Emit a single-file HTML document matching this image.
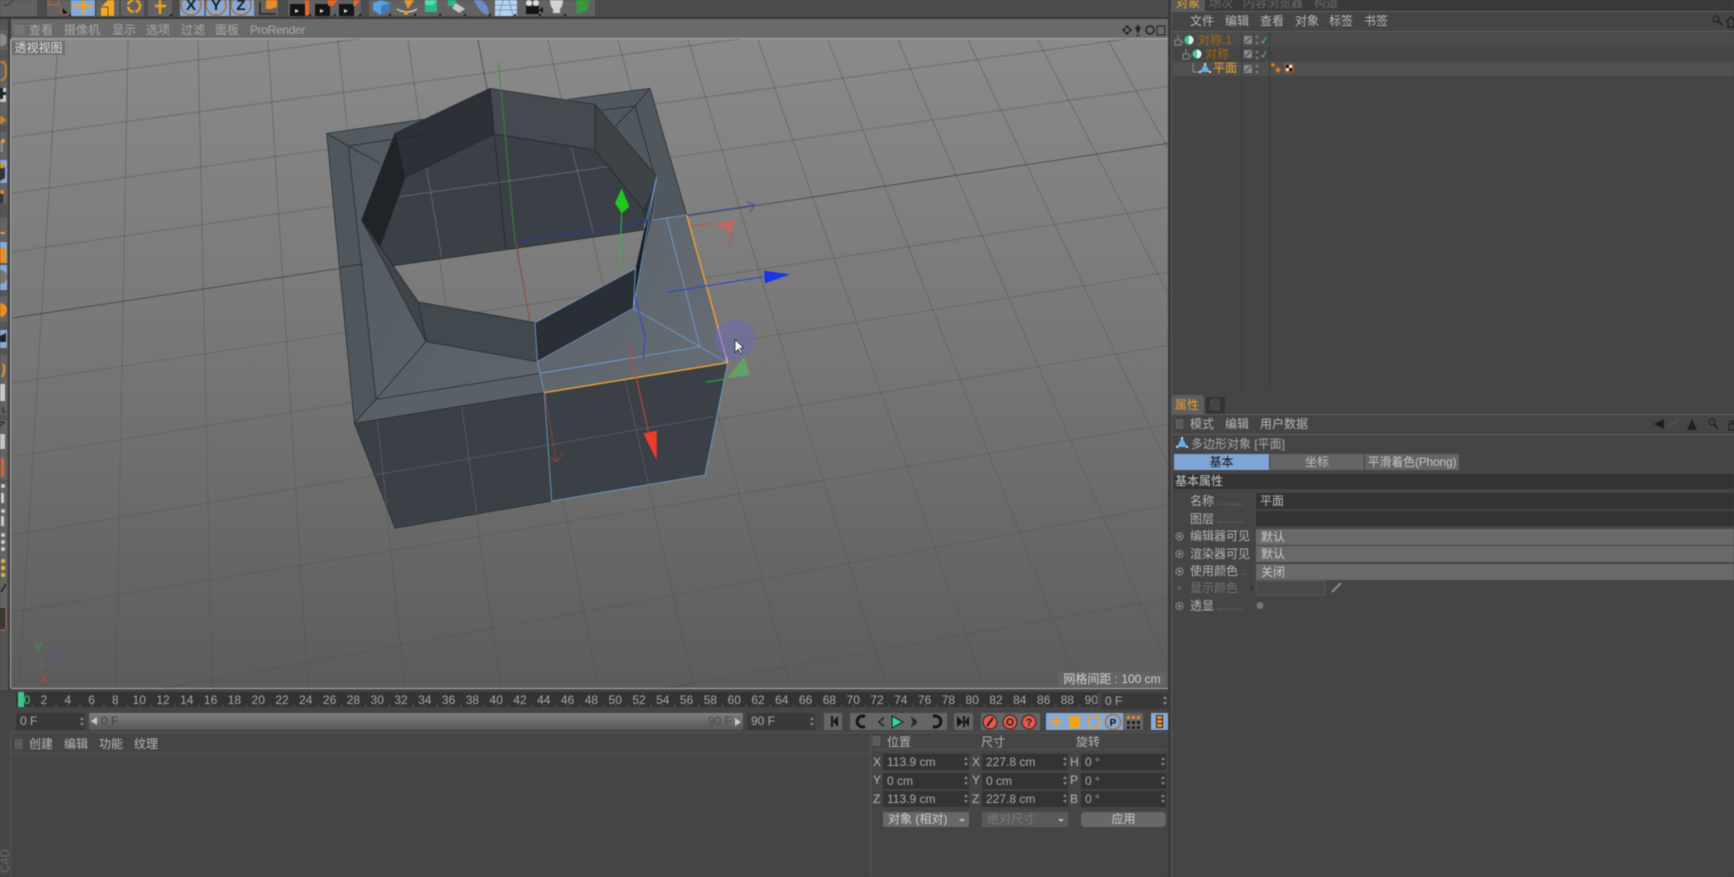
<!DOCTYPE html>
<html><head><meta charset="utf-8"><style>
html,body{margin:0;padding:0;background:#454545;width:1734px;height:877px;overflow:hidden}
#r{position:relative;width:1734px;height:877px;overflow:hidden;background:#454545;font:12px/16px "Liberation Sans","Noto Sans CJK SC",sans-serif;color:#b5b5b5;filter:blur(.4px)}
#r div{position:absolute;white-space:nowrap}
.m{color:#b8b8b8}.v{color:#a9a9a9}.f{background:#333;height:16px;color:#aaa;padding-left:4px;box-sizing:border-box}
.g{background:#696969;height:16px;color:#ccc;box-sizing:border-box;padding-left:5px}
svg{position:absolute;left:0;top:0}
</style></head><body><div id="r">
<div style="left:0;top:0;width:1168px;height:17px;background:#4c4c4c"></div>
<div style="left:0;top:17px;width:1168px;height:2px;background:#383838"></div>
<div style="left:10px;top:19px;width:1158px;height:20px;background:#6a6a6a"></div>
<div style="left:0;top:19px;width:8px;height:671px;background:#555"></div>
<div style="left:8px;top:19px;width:3px;height:671px;background:#3c3c3c"></div>
<svg width="1157" height="649" viewBox="11 39 1157 649" style="left:11px;top:39px">
<defs>
<linearGradient id="bg" x1="0" y1="0" x2="0" y2="1"><stop offset="0" stop-color="#8a8a8a"/><stop offset=".5" stop-color="#767676"/><stop offset="1" stop-color="#5c5c5c"/></linearGradient>
<linearGradient id="gl" gradientUnits="userSpaceOnUse" x1="0" y1="39" x2="0" y2="688"><stop offset="0" stop-color="#383838" stop-opacity=".37"/><stop offset="1" stop-color="#383838" stop-opacity=".18"/></linearGradient>
<linearGradient id="tp" gradientUnits="userSpaceOnUse" x1="100" y1="300" x2="1200" y2="900"><stop offset="0" stop-color="#525a60"/><stop offset="1" stop-color="#646b72"/></linearGradient>
<linearGradient id="zx" gradientUnits="userSpaceOnUse" x1="0" y1="39" x2="0" y2="688"><stop offset="0" stop-color="#303030" stop-opacity=".62"/><stop offset=".5" stop-color="#303030" stop-opacity=".3"/><stop offset="1" stop-color="#383838" stop-opacity=".18"/></linearGradient>
</defs>
<rect x="11" y="39" width="1157" height="649" fill="url(#bg)"/>
<g stroke="url(#gl)" stroke-width="1" fill="none">
<path d="M58 40L19 688M128 40L116 688M198 40L212 688M268 40L308 688M338 40L405 688M408 40L501 688M548 40L694 688M618 40L791 688M688 40L887 688M758 40L984 688M828 40L1080 688M898 40L1177 688M968 40L1273 688M1038 40L1370 688M1108 40L1466 688"/>
<path d="M12 35L1170 -110M12 84L1170 -66M12 137L1170 -19M12 193L1170 33M12 252L1170 86M12 383L1170 207M12 457L1170 272M12 535L1170 345M12 612L1170 424M12 716L1170 505M12 805L1170 598"/>
</g>
<path d="M12 318L1170 143" stroke="#303030" stroke-width="1" fill="none" opacity=".62"/>
<path d="M478 40L598 688" stroke="url(#zx)" stroke-width="1" fill="none"/>
<g transform="translate(300 60) scale(.33333)" stroke-linejoin="round">
<path d="M163 1090L1283 908L1215 1245L755 1323L285 1405Z" fill="#3a4045"/>
<path fill-rule="evenodd" fill="url(#tp)" d="M80 220L370 178L805 118L1050 85L1160 465L1283 908L733 998L163 1090ZM185 480L378 845L712 905L1000 745L1070 350L885 133L570 85L285 220Z"/>
<path d="M80 220L145 258L228 1018L163 1090Z" fill="#4f575d"/>
<path d="M805 118L1050 85L1160 465L1060 480L1072 350L885 133Z" fill="#50575d"/>
<path d="M163 1090L228 1018L720 940L733 998Z" fill="#596066"/>
<path d="M315 352L583 222L885 270L1030 450L1030 510L275 618L240 560Z" fill="#3a4046"/>
<path d="M185 480L285 220L315 352L240 560Z" fill="#1f2428"/>
<path d="M285 220L570 85L583 222L315 352Z" fill="#2d3036"/>
<path d="M570 85L885 133L885 270L583 222Z" fill="#444a50"/>
<path d="M885 133L1070 350L1030 450L885 270Z" fill="#3e4348"/>
<path d="M1070 350L1062 430L1035 500L1030 450Z" fill="#2f3338"/>
<path d="M1062 430L1003 715L1007 625L1035 500Z" fill="#1b2026"/>
<path d="M705 788L1005 625L1000 745L712 905Z" fill="#2a2f36"/>
<path d="M355 726L705 788L712 905L378 845Z" fill="#41484e"/>
<path d="M185 480L240 560L355 726L378 845Z" fill="#3f454b"/>
<g fill="none" stroke="#8c9095" stroke-width="2.4" opacity=".6">
<path d="M300 410L925 320M380 325L425 592M815 265L880 520"/>
<path d="M225 1245L1240 1070M232 1080L262 1360M485 1040L530 1360M975 960L1045 1270" stroke="#6f7479"/>
</g>
<g fill="none" stroke="#1d2226" stroke-width="2.3" opacity=".85">
<path d="M80 220L370 178M805 118L1050 85L1160 465M80 220L163 1090L733 998M80 220L145 258L228 1018L720 940M145 258L365 225M163 1090L228 1018L378 845M145 258L240 310M1050 85L1005 138L945 200M1005 138L905 150M1005 138L1062 340M120 622L190 612"/>
<path d="M185 480L285 220L570 85L885 133L1070 350M285 220L315 352L583 222L885 270L1030 450M570 85L583 222L617 565M885 133L885 270M185 480L240 560L355 726L705 788M185 480L378 845L712 905M355 726L378 845M240 560L315 352M275 618L1030 510M1030 450L1030 510"/>
<path d="M163 1090L285 1405L755 1323" stroke-width="2"/>
</g>
<g fill="none" stroke="#6ea3d8" stroke-width="2.4">
<path d="M705 788L712 905L733 998L755 1323L1215 1245L1283 908M720 940L1200 860L1283 908M1200 860L1100 475M1000 745L1200 860M712 905L1000 745M705 788L1007 625L1000 745L1070 350L1035 500M1060 480L1160 465"/>
</g>
<path d="M1160 465L1283 908L733 998" fill="none" stroke="#f2a52c" stroke-width="4"/>
<path d="M1252 800L1283 908" stroke="#e8a5cf" stroke-width="4"/>
<g fill="none" stroke-width="2.6">
<path d="M595 5L645 545" stroke="#3d8b3d"/>
<path d="M648 545L1040 485" stroke="#2636a8"/>
<path d="M1160 465L1365 435M1340 425L1365 435L1348 457" stroke="#3b48a8"/>
<path d="M648 545L690 785" stroke="#a04a40"/>
<path d="M735 1000L768 1205M745 1188L768 1205L790 1180" stroke="#a53c36"/>
<path d="M958 635L965 460" stroke="#30b54a" stroke-width="3"/>
<path d="M985 848L1045 1115" stroke="#c8483c" stroke-width="3"/>
<path d="M1100 697L1392 650" stroke="#2c3fdc" stroke-width="3"/>
<path d="M1005 710L1035 830L1030 895" stroke="#3044d8" stroke-width="3"/>
<path d="M1170 497L1240 490M1295 520L1288 560" stroke="#b8544c" stroke-width="3"/>
<path d="M1218 967L1283 955" stroke="#2f9a3c" stroke-width="4"/>
<path d="M1318 835L1332 890" stroke="#4ab0b8" stroke-width="3"/>
</g>
<path d="M965 385L945 430L965 460L988 440Z" fill="#1fc71f"/>
<path d="M1030 1120L1070 1112L1070 1200Z" fill="#f03c26"/>
<path d="M1392 632L1470 643L1395 670Z" fill="#1c33ea"/>
<path d="M1240 490L1305 478L1295 520Z" fill="#c9655c" opacity=".8"/>
<path d="M1283 955L1350 945L1332 890Z" fill="#5fa565" opacity=".9"/>
<circle cx="1305" cy="838" r="60" fill="#6c6cb0" opacity=".55"/>
<path d="M1305 838L1305 878L1315 868L1323 882L1328 878L1320 865L1331 863Z" fill="#f4f4f4" stroke="#111" stroke-width="2"/>
</g>
<path d="M42 668V652M42 668L54 660M42 668V675" stroke="#666" fill="none"/>
<text x="38" y="651" font-family="Liberation Sans" font-size="11" fill="#3ea550" text-anchor="middle">Y</text>
<text x="58" y="660" font-family="Liberation Sans" font-size="11" fill="#4a5ec0" text-anchor="middle">Z</text>
<text x="44" y="683" font-family="Liberation Sans" font-size="11" fill="#c8423a" text-anchor="middle">X</text>
</svg>
<div style="left:11px;top:38px;width:1157px;height:1px;background:#a8a8a8"></div>
<div style="left:10px;top:39px;width:1px;height:649px;background:#a8a8a8"></div>
<div style="left:11px;top:688px;width:1157px;height:1px;background:#a8a8a8"></div>

<svg width="1734" height="877" viewBox="0 0 1734 877">
<g fill="#626262"><rect x="0" y="0" width="37" height="16"/><rect x="47" y="0" width="97" height="16"/><rect x="148" y="0" width="24" height="16"/><rect x="180" y="0" width="98" height="16"/><rect x="288" y="0" width="73" height="16"/><rect x="369" y="0" width="226" height="16"/></g>
<rect x="71" y="0" width="24" height="16" fill="#86a9d8"/><rect x="180" y="0" width="74" height="16" fill="#86a9d8"/>
<g fill="none" stroke="#3a3a3a"><path d="M13 0Q9 6 3 5M95.500 0V16M120 0V16M205 0V16M230 0V16"/></g>
<path d="M48 0V5H59V0M61 8L67 14L61 13Z" stroke="#c2603a" stroke-width="1.2" fill="none"/><path d="M62 8L68 13L63 14Z" fill="#111"/>
<g stroke="#f0a21e" stroke-width="2.4" fill="none"><path d="M83 0V14M74 6H92M155 6H166M160 0V14"/></g>
<path d="M101 16V7L108 0H114V16Z" fill="#f2aa24"/><path d="M101 7H108V16" fill="none" stroke="#6b5a34"/>
<circle cx="134" cy="6" r="6" fill="none" stroke="#f0a21e" stroke-width="2.4" stroke-dasharray="8 2"/>
<g fill="none" stroke="#a9703a" stroke-width="1.6"><circle cx="191" cy="5" r="10"/><circle cx="216" cy="5" r="10"/><circle cx="241" cy="5" r="10"/></g>
<g font-family="Liberation Sans" font-size="15" font-weight="bold" fill="#1b1b1b" text-anchor="middle"><text x="191" y="10">X</text><text x="216" y="10">Y</text><text x="241" y="10">Z</text></g>
<path d="M260 2V14H276" fill="none" stroke="#222" stroke-width="1.5"/><path d="M266 0H277V7L271 9H266Z" fill="#ec8a28"/>
<g fill="#141414"><rect x="290" y="4" width="15" height="12"/><rect x="315" y="4" width="15" height="12"/><rect x="339" y="4" width="15" height="12"/></g>
<g fill="#ddd"><path d="M295 9L299 11L295 13ZM320 9L324 11L320 13ZM344 9L348 11L344 13Z"/></g>
<g fill="#e4662a"><path d="M305 0H309V15H305ZM328 0H338L333 6H328ZM354 0H360L356 6H353Z"/></g>
<path d="M373 3L381 0L390 3V10L381 15L373 10Z" fill="#5aa3e0"/><path d="M381 6L390 3V10L381 15Z" fill="#3e7cba"/>
<path d="M404 0H414L408 9Z" fill="#ea9a2a"/><path d="M397 9Q407 15 417 9" stroke="#ddd" fill="none" stroke-width="1.2"/><circle cx="406" cy="13" r="2" fill="#e89a28"/>
<path d="M425 0H437V12H425Z" fill="#2cb98a"/><path d="M425 0H437L433 5H425Z" fill="#54dfae"/>
<path d="M448 0H456V6H448Z" fill="#2cb98a"/><path d="M456 3L465 9L459 13L452 8Z" fill="#c4c4c4"/>
<path d="M474 0H481Q490 6 488 15Q480 14 474 0Z" fill="#6f8ac9"/>
<path d="M495 0H517V16H495Z" fill="#b7d3f0"/><path d="M495 5H517M495 10H517M503 0L499 16M509 0L513 16" stroke="#7e9bc0" fill="none"/>
<rect x="526" y="6" width="13" height="8" fill="#141414"/><circle cx="529" cy="3" r="3" fill="#ddd"/><circle cx="536" cy="3" r="3" fill="#ddd"/><path d="M539 10L543 7V13Z" fill="#141414"/>
<path d="M550 0H563Q563 6 560 9V13H553V9Q550 6 550 0Z" fill="#d2d2d2"/>
<path d="M576 0H590L587 10L577 14Z" fill="#27a43c"/><path d="M578 7L588 2" stroke="#d83a34" stroke-width="1.6" stroke-dasharray="2 1.400"/>
<g fill="#1c1c1c"><path d="M68 16H71V13ZM169 16H172V13ZM308 16H311V13ZM333 16H336V13ZM358 16H361V13ZM388 16H391V13ZM413 16H416V13ZM438 16H441V13ZM463 16H466V13ZM488 16H491V13ZM513 16H516V13ZM538 16H541V13ZM563 16H566V13Z"/></g>
<g fill="#646464"><rect y="30" width="7" height="20"/><rect y="60" width="7" height="65"/><rect y="132" width="7" height="72"/><rect y="218" width="7" height="24"/><rect y="296" width="7" height="26"/><rect y="355" width="7" height="60"/><rect y="420" width="7" height="60"/><rect y="483" width="7" height="125"/></g>
<g fill="#86a9d8"><rect y="160" width="7" height="23"/><rect y="242" width="7" height="21"/><rect y="265" width="7" height="25"/><rect y="330" width="7" height="18"/></g>
<circle cx="1" cy="40" r="6" fill="#8c8c8c"/>
<path d="M0 62H3L6 66V76L3 80H0" fill="none" stroke="#d9872a" stroke-width="1.500"/>
<rect y="88" width="6" height="14" fill="#ccc"/><path d="M0 88H3V92H6V95H3V99H0Z" fill="#222"/>
<path d="M0 115L6 120L0 125Z" fill="#cc8530"/>
<path d="M0 141H3V152H0Z" fill="#888"/><circle cx="3" cy="141" r="2" fill="#e9972c"/>
<path d="M0 167H5V178L0 181Z" fill="#333"/><circle cx="2" cy="166" r="2.500" fill="#e09028"/>
<path d="M0 193H3V203H0Z" fill="#333"/><circle cx="2" cy="192" r="2" fill="#e09028"/>
<path d="M0 233H5" stroke="#e9972c" stroke-width="2"/>
<rect y="248" width="6" height="15" fill="#e88f1f"/><circle cx="0" cy="277" r="7" fill="#777"/><circle cx="0" cy="310" r="7" fill="#e8921c"/>
<path d="M0 336L6 333V342H0Z" fill="#222"/><path d="M3 364Q6 370 2 377" stroke="#e9972c" stroke-width="2" fill="none"/>
<rect y="384" width="5" height="17" fill="#c8c8c8"/><path d="M3 407V412H6M0 422H4M0 426L5 422" stroke="#222" fill="none"/>
<rect x="0" y="434" width="5" height="15" fill="#c4c4c4"/><rect x="1" y="458" width="3" height="19" fill="#d56a28"/>
<g fill="#ccc"><circle cx="3" cy="486" r="2"/><rect x="1" y="493" width="3" height="10"/><circle cx="3" cy="511" r="2"/><rect x="1" y="516" width="3" height="10"/><circle cx="3" cy="535" r="2"/><circle cx="3" cy="542" r="2"/><circle cx="3" cy="549" r="2"/></g>
<g fill="#e6b63a"><circle cx="3" cy="561" r="2"/><circle cx="3" cy="568" r="2"/><circle cx="3" cy="575" r="2"/></g>
<path d="M1 592L6 584" stroke="#222" stroke-width="1.600"/><rect x="-4" y="607" width="10" height="23" rx="2" fill="#3d3835" stroke="#a4724e"/>
<g fill="none" stroke="#9b9b9b" stroke-dasharray="1 1"><path d="M15 26H24M15 28H24M15 30H24M15 32H24M15 34H24"/><path d="M1176 17H1184M1176 19H1184M1176 21H1184M1176 23H1184M1176 25H1184M1176 420H1184M1176 422H1184M1176 424H1184M1176 426H1184M1176 428H1184M15 740H23M15 742H23M15 744H23M15 746H23M15 748H23M873 737H881M873 739H881M873 741H881M873 743H881M873 745H881"/></g>
<g fill="#232323"><path d="M1122 30L1125 27V33ZM1132 30L1129 27V33ZM1127 25L1124 28H1130ZM1127 35L1124 32H1130ZM1135 27H1141L1138 34ZM1136 35H1140V36H1136Z"/></g><path d="M1138 25V30" stroke="#232323" stroke-width="2"/>
<circle cx="1150" cy="30" r="4" fill="none" stroke="#232323" stroke-width="1.500"/><rect x="1157" y="26" width="8" height="9" fill="none" stroke="#232323"/>
</svg>

<div class="v" style="left:29px;top:22px">查看</div><div class="v" style="left:64px;top:22px">摄像机</div><div class="v" style="left:112px;top:22px">显示</div><div class="v" style="left:146px;top:22px">选项</div><div class="v" style="left:181px;top:22px">过滤</div><div class="v" style="left:215px;top:22px">面板</div><div class="v" style="left:250px;top:22px;letter-spacing:-.35px">ProRender</div>
<div style="left:12px;top:41px;width:53px;height:14px;background:#6f6f6f;color:#ddd;text-align:center;line-height:14px">透视视图</div>
<div style="left:1058px;top:672px;width:108px;height:15px;background:#646464;color:#d0d0d0;text-align:center;line-height:15px">网格间距 : 100 cm</div>

<!-- timeline -->
<svg width="1734" height="877" viewBox="0 0 1734 877">
<rect x="16" y="692" width="1081" height="15" fill="#333"/>
<rect x="18" y="692" width="6" height="15" fill="#3cc78a"/>
<path d="M20 705.500H1097" stroke="#8f8f8f" stroke-width="1" stroke-dasharray="1 10.900"/>
<g font-family="Liberation Sans" font-size="12" fill="#a8a8a8" text-anchor="middle">
<text x="27" y="704" fill="#3cc78a">0</text><text x="44" y="704">2</text><text x="67.800" y="704">4</text><text x="91.600" y="704">6</text><text x="115.400" y="704">8</text><text x="139.200" y="704">10</text><text x="163" y="704">12</text><text x="186.800" y="704">14</text><text x="210.600" y="704">16</text><text x="234.400" y="704">18</text><text x="258.200" y="704">20</text><text x="282" y="704">22</text><text x="305.800" y="704">24</text><text x="329.600" y="704">26</text><text x="353.400" y="704">28</text><text x="377.200" y="704">30</text><text x="401" y="704">32</text><text x="424.800" y="704">34</text><text x="448.600" y="704">36</text><text x="472.400" y="704">38</text><text x="496.200" y="704">40</text><text x="520" y="704">42</text><text x="543.800" y="704">44</text><text x="567.600" y="704">46</text><text x="591.400" y="704">48</text><text x="615.200" y="704">50</text><text x="639" y="704">52</text><text x="662.800" y="704">54</text><text x="686.600" y="704">56</text><text x="710.400" y="704">58</text><text x="734.200" y="704">60</text><text x="758" y="704">62</text><text x="781.800" y="704">64</text><text x="805.600" y="704">66</text><text x="829.400" y="704">68</text><text x="853.200" y="704">70</text><text x="877" y="704">72</text><text x="900.800" y="704">74</text><text x="924.600" y="704">76</text><text x="948.400" y="704">78</text><text x="972.200" y="704">80</text><text x="996" y="704">82</text><text x="1019.800" y="704">84</text><text x="1043.600" y="704">86</text><text x="1067.400" y="704">88</text><text x="1091.200" y="704">90</text>
</g>
<rect x="1097" y="690" width="4" height="20" fill="#454545"/>
<defs><linearGradient id="sl" x1="0" y1="0" x2="0" y2="1"><stop offset="0" stop-color="#7f7f7f"/><stop offset="1" stop-color="#565656"/></linearGradient></defs>
<rect x="89" y="713" width="654" height="17" rx="2" fill="url(#sl)"/>
<rect x="824" y="713" width="18" height="17" fill="#666"/><rect x="850" y="713" width="97" height="17" fill="#666"/><rect x="954" y="713" width="19" height="17" fill="#666"/><rect x="981" y="713" width="59" height="17" fill="#666"/><rect x="1046" y="713" width="97" height="17" fill="#666"/><rect x="1046" y="713" width="77" height="17" fill="#86a9d8"/><rect x="1151" y="713" width="17" height="17" fill="#86a9d8"/>
<g fill="#141414"><path d="M831 716H833V727H831ZM833 721.500L838 716V727Z"/><path d="M878 722L882 718V726ZM883 717L880 722L883 727H884L882 722L884 717Z"/><path d="M912 717L915 722L912 727H911L913 722L911 717ZM917 722L914 718V726Z"/><path d="M958 716L964 722L958 727ZM964 716H966V727H964ZM966 722L970 716V727Z" transform="translate(-1 0)"/></g>
<path d="M865 716.500A5.500 5.500 0 1 0 865 726.500" fill="none" stroke="#141414" stroke-width="3"/><path d="M933 716.500A5.500 5.500 0 1 1 933 726.500" fill="none" stroke="#141414" stroke-width="3"/>
<path d="M892 716L903 722L892 728Z" fill="#2ddc8a" stroke="#1a1a1a"/>
<g fill="#e7594a" stroke="#222"><circle cx="990" cy="722" r="7"/><circle cx="1010" cy="722" r="7"/><circle cx="1029" cy="722" r="7"/></g>
<path d="M987 726L993 718" stroke="#222" stroke-width="2"/><circle cx="1010" cy="722" r="3" fill="none" stroke="#222" stroke-width="1.500"/>
<text x="1029" y="726" font-family="Liberation Sans" font-size="11" font-weight="bold" fill="#222" text-anchor="middle">?</text>
<path d="M1056 716V728M1050 722H1062" stroke="#f0a21e" stroke-width="2.200"/>
<rect x="1069" y="716" width="11" height="12" fill="#f0a21e"/><circle cx="1094" cy="722" r="6" fill="none" stroke="#f0a21e" stroke-width="2" stroke-dasharray="7 2"/>
<circle cx="1113" cy="722" r="7.500" fill="none" stroke="#a9703a" stroke-width="1.600"/><text x="1113" y="726" font-family="Liberation Sans" font-size="10" font-weight="bold" fill="#111" text-anchor="middle">P</text>
<g fill="#1c1c1c"><rect x="1127" y="716" width="3" height="3" fill="#e08a30"/><rect x="1132" y="716" width="3" height="3" fill="#e08a30"/><rect x="1137" y="716" width="3" height="3" fill="#e08a30"/><rect x="1127" y="721" width="3" height="3"/><rect x="1132" y="721" width="3" height="3"/><rect x="1137" y="721" width="3" height="3"/><rect x="1127" y="726" width="3" height="3"/><rect x="1132" y="726" width="3" height="3"/><rect x="1137" y="726" width="3" height="3"/></g>
<rect x="1156" y="715" width="7" height="13" fill="#2a2a2a"/><rect x="1157" y="716" width="5" height="3" fill="#e8922a"/><rect x="1157" y="720" width="5" height="3" fill="#e8922a"/><rect x="1157" y="724" width="5" height="3" fill="#e8922a"/>
<path d="M11 732.500H1168M11 753.500H870M873 749.500H1168M10.500 732V877" stroke="#555" stroke-width="1"/>
<path d="M870.500 733V877M1168.500 733V877" stroke="#565656" stroke-width="1"/>
<path d="M1168 0H1172V877H1168Z" fill="#3a3a3a"/><path d="M1171.500 0V877" stroke="#5c5c5c"/>
<path d="M97 717L91 721L97 725Z" fill="#ccc"/><path d="M735 718L741 722L735 726Z" fill="#ccc"/>
</svg>
<div style="left:1101px;top:693px;width:67px;height:16px;background:#393939;color:#aaa;padding-left:4px;box-sizing:border-box">0 F</div>
<div style="left:16px;top:713px;width:69px;height:17px;background:#393939;color:#aaa;padding-left:4px;box-sizing:border-box">0 F</div>
<div style="left:101px;top:713px;color:#444">0 F</div><div style="left:708px;top:713px;color:#4a4a4a">90 F</div>
<div style="left:747px;top:713px;width:68px;height:17px;background:#393939;color:#aaa;padding-left:4px;box-sizing:border-box">90 F</div>

<div class="m" style="left:29px;top:736px">创建</div><div class="m" style="left:64px;top:736px">编辑</div><div class="m" style="left:99px;top:736px">功能</div><div class="m" style="left:134px;top:736px">纹理</div>
<div style="left:-7px;top:853px;transform:rotate(-90deg);color:#6b6b6b">C4D</div>

<div style="left:887px;top:734px">位置</div><div style="left:981px;top:734px">尺寸</div><div style="left:1076px;top:734px">旋转</div>
<div style="left:873px;top:754px">X</div><div style="left:873px;top:772px">Y</div><div style="left:873px;top:791px">Z</div>
<div style="left:972px;top:754px">X</div><div style="left:972px;top:772px">Y</div><div style="left:972px;top:791px">Z</div>
<div style="left:1070px;top:754px">H</div><div style="left:1070px;top:772px">P</div><div style="left:1070px;top:791px">B</div>
<div class="f" style="left:883px;top:754px;width:86px">113.9 cm</div><div class="f" style="left:982px;top:754px;width:86px">227.8 cm</div><div class="f" style="left:1081px;top:754px;width:85px">0 °</div>
<div class="f" style="left:883px;top:773px;width:86px">0 cm</div><div class="f" style="left:982px;top:773px;width:86px">0 cm</div><div class="f" style="left:1081px;top:773px;width:85px">0 °</div>
<div class="f" style="left:883px;top:791px;width:86px">113.9 cm</div><div class="f" style="left:982px;top:791px;width:86px">227.8 cm</div><div class="f" style="left:1081px;top:791px;width:85px">0 °</div>
<div style="left:883px;top:812px;width:86px;height:15px;background:#686868;color:#ccc;line-height:15px;padding-left:5px;box-sizing:border-box">对象 (相对)</div>
<div style="left:982px;top:812px;width:86px;height:15px;background:#5a5a5a;color:#7a7a7a;line-height:15px;padding-left:5px;box-sizing:border-box">绝对尺寸</div>
<div style="left:1081px;top:812px;width:85px;height:15px;background:#686868;color:#ccc;line-height:15px;text-align:center;border-radius:4px">应用</div>
<svg width="1734" height="877" viewBox="0 0 1734 877" style="z-index:2">
<g fill="#8a8a8a"><path d="M80 720L82 717L84 720ZM80 723L82 726L84 723ZM810 720L812 717L814 720ZM810 723L812 726L814 723ZM1163 699L1165 696L1167 699ZM1163 702L1165 705L1167 702ZM964 760L966 757L968 760ZM964 763L966 766L968 763ZM1063 760L1065 757L1067 760ZM1063 763L1065 766L1067 763ZM1161 760L1163 757L1165 760ZM1161 763L1163 766L1165 763ZM964 779L966 776L968 779ZM964 782L966 785L968 782ZM1063 779L1065 776L1067 779ZM1063 782L1065 785L1067 782ZM1161 779L1163 776L1165 779ZM1161 782L1163 785L1165 782ZM964 797L966 794L968 797ZM964 800L966 803L968 800ZM1063 797L1065 794L1067 797ZM1063 800L1065 803L1067 800ZM1161 797L1163 794L1165 797ZM1161 800L1163 803L1165 800Z"/></g>
<path d="M959 819H965L962 822ZM1058 819H1064L1061 822Z" fill="#bbb"/>
</svg>

<!-- right panel: objects -->
<div style="left:1172px;top:0;width:562px;height:11px;background:#3a3a3a"></div>
<div style="left:1172px;top:0;width:33px;height:11px;background:#5a5a5a"></div>
<div style="left:1172px;top:11px;width:562px;height:1px;background:#5e5e5e"></div>
<div style="left:1172px;top:12px;width:562px;height:19px;background:#454545;border-bottom:1px solid #5c5c5c"></div>
<div style="left:1176px;top:-5px;color:#e9a02c">对象</div><div style="left:1209px;top:-5px;color:#6c6c6c">场次</div><div style="left:1243px;top:-5px;color:#6c6c6c">内容浏览器</div><div style="left:1314px;top:-5px;color:#6c6c6c">构造</div>
<div class="m" style="left:1190px;top:13px">文件</div><div class="m" style="left:1225px;top:13px">编辑</div><div class="m" style="left:1260px;top:13px">查看</div><div class="m" style="left:1295px;top:13px">对象</div><div class="m" style="left:1329px;top:13px">标签</div><div class="m" style="left:1364px;top:13px">书签</div>
<div style="left:1173px;top:32px;width:561px;height:15px;background:#4b4b4b"></div>
<div style="left:1173px;top:47px;width:561px;height:15px;background:#454545"></div>
<div style="left:1173px;top:62px;width:561px;height:14px;background:#505050"></div>
<div style="left:1198px;top:32px;color:#a5680f">对称.1</div><div style="left:1205px;top:46px;color:#a5680f">对称</div><div style="left:1213px;top:60px;color:#eba62e">平面</div>
<svg width="1734" height="877" viewBox="0 0 1734 877">
<path d="M1241.500 32V390M1269.500 32V390" stroke="#3b3b3b"/>
<g fill="none" stroke="#8a8a8a"><path d="M1175 40H1181V45H1175ZM1178 35V40M1182 42H1184M1183 54H1189V59H1183ZM1186 49V54M1190 56H1192M1193 63V72H1199"/></g>
<circle cx="1189" cy="40" r="4.500" fill="#3ecf8e"/><path d="M1189 35.500A4.500 4.500 0 0 1 1189 44.500Z" fill="#eee"/>
<circle cx="1197" cy="54" r="4.500" fill="#3ecf8e"/><path d="M1197 49.500A4.500 4.500 0 0 1 1197 58.500Z" fill="#eee"/>
<path d="M1205 63L1210 72H1200Z" fill="#6aaee8"/><circle cx="1205" cy="64" r="1" fill="#fff"/><circle cx="1200" cy="72" r="1" fill="#fff"/><circle cx="1210" cy="72" r="1" fill="#fff"/>
<g fill="#8a8a8a"><rect x="1244" y="36" width="8" height="8"/><rect x="1244" y="50" width="8" height="8"/><rect x="1244" y="65" width="8" height="8"/></g>
<path d="M1245 43L1251 37M1245 57L1251 51M1245 72L1251 66" stroke="#444" stroke-width="1"/>
<g fill="#777"><circle cx="1257" cy="37" r="1.500"/><circle cx="1257" cy="43" r="1.500"/><circle cx="1257" cy="52" r="1.500"/><circle cx="1257" cy="58" r="1.500"/><circle cx="1257" cy="66" r="1.500"/><circle cx="1257" cy="72" r="1.500"/></g>
<path d="M1261 41L1263 43L1266 37M1261 55L1263 57L1266 51" stroke="#3fb884" fill="none"/>
<circle cx="1273" cy="65" r="2" fill="#c57a24"/><circle cx="1278" cy="70" r="2.500" fill="#c57a24"/>
<rect x="1284" y="63" width="10" height="10" fill="#8a5a2c"/><path d="M1286 65h3v3h-3zM1289 68h3v3h-3z" fill="#111"/><path d="M1289 65h3v3h-3zM1286 68h3v3h-3z" fill="#eee"/>
<circle cx="1716" cy="19" r="3" fill="none" stroke="#1e1e1e"/><path d="M1718 21L1722 25" stroke="#1e1e1e" stroke-width="1.500"/>
<path d="M1726 22L1731 17L1734 20V27H1728V22" fill="none" stroke="#1e1e1e" stroke-width="1.300"/>
<path d="M1654 424L1664 419V429Z" fill="#1e1e1e"/><path d="M1666 428L1678 420" stroke="#4f4f4f" stroke-width="2"/>
<path d="M1692 419L1697 430H1687Z" fill="#1e1e1e"/><circle cx="1712" cy="422" r="3" fill="none" stroke="#1e1e1e"/><path d="M1714 424L1718 429" stroke="#1e1e1e" stroke-width="1.500"/>
<rect x="1729" y="424" width="5" height="6" fill="none" stroke="#1e1e1e"/><path d="M1730 424V421H1733V424" fill="none" stroke="#1e1e1e"/>
<path d="M1182 437L1187 447H1177Z" fill="#6aaee8"/><circle cx="1182" cy="438" r="1" fill="#fff"/><circle cx="1177" cy="447" r="1" fill="#fff"/><circle cx="1187" cy="447" r="1" fill="#fff"/>
<g fill="none" stroke="#8f8f8f"><circle cx="1179.500" cy="536.500" r="3.500"/><circle cx="1179.500" cy="554" r="3.500"/><circle cx="1179.500" cy="571.500" r="3.500"/><circle cx="1179.500" cy="606" r="3.500"/></g>
<g fill="#8f8f8f"><circle cx="1179.500" cy="536.500" r="1.500"/><circle cx="1179.500" cy="554" r="1.500"/><circle cx="1179.500" cy="571.500" r="1.500"/><circle cx="1179.500" cy="606" r="1.500"/></g>
<circle cx="1179.500" cy="588" r="2" fill="#5d5d5d"/>
<rect x="1256" y="581" width="69" height="14" fill="#494949" stroke="#575757"/>
<path d="M1332 592L1341 583" stroke="#8a8a8a" stroke-width="2"/>
<circle cx="1260" cy="605.500" r="3.500" fill="#757575"/>
<path d="M1251 586L1253 588L1251 590Z" fill="#222"/>
</svg>

<!-- attributes -->
<div style="left:1172px;top:390px;width:562px;height:24px;background:#454545"></div>
<div style="left:1172px;top:395px;width:32px;height:19px;background:#5e5e5e;border-radius:3px 3px 0 0"></div>
<div style="left:1206px;top:397px;width:19px;height:17px;background:#343434"></div>
<div style="left:1172px;top:414px;width:562px;height:1px;background:#5e5e5e"></div>
<div style="left:1172px;top:434px;width:562px;height:1px;background:#5e5e5e"></div>
<div style="left:1175px;top:397px;color:#ec9f24">属性</div><div style="left:1209px;top:397px;color:#5e5e5e">层</div>
<div class="m" style="left:1190px;top:416px">模式</div><div class="m" style="left:1225px;top:416px">编辑</div><div class="m" style="left:1260px;top:416px">用户数据</div>
<div style="left:1191px;top:436px;color:#a9a9a9">多边形对象 [平面]</div>
<div style="left:1174px;top:454px;width:95px;height:16px;background:#7fa5d6;color:#111;text-align:center">基本</div>
<div style="left:1270px;top:454px;width:94px;height:16px;background:#656565;color:#bcbcbc;text-align:center">坐标</div>
<div style="left:1365px;top:454px;width:94px;height:16px;background:#656565;color:#c4c4c4;text-align:center;letter-spacing:-.2px">平滑着色(Phong)</div>
<div style="left:1174px;top:474px;width:560px;height:15px;background:#333;color:#c8c8c8;line-height:15px;padding-left:1px">基本属性</div>
<div style="left:1190px;top:493px">名称 <span style="color:#777">........</span></div>
<div style="left:1190px;top:511px">图层 <span style="color:#777">........</span></div>
<div style="left:1190px;top:528px">编辑器可见</div>
<div style="left:1190px;top:546px">渲染器可见</div>
<div style="left:1190px;top:563px">使用颜色 <span style="color:#777">..</span></div>
<div style="left:1190px;top:580px;color:#747474">显示颜色</div>
<div style="left:1190px;top:598px">透显 <span style="color:#777">........</span></div>
<div style="left:1256px;top:493px;width:478px;height:16px;background:#333;color:#b8b8b8;padding-left:4px;box-sizing:border-box">平面</div>
<div style="left:1256px;top:511px;width:478px;height:15px;background:#333"></div>
<div class="g" style="left:1256px;top:529px;width:478px">默认</div>
<div class="g" style="left:1256px;top:546px;width:478px">默认</div>
<div class="g" style="left:1256px;top:564px;width:478px">关闭</div>
</div></body></html>
